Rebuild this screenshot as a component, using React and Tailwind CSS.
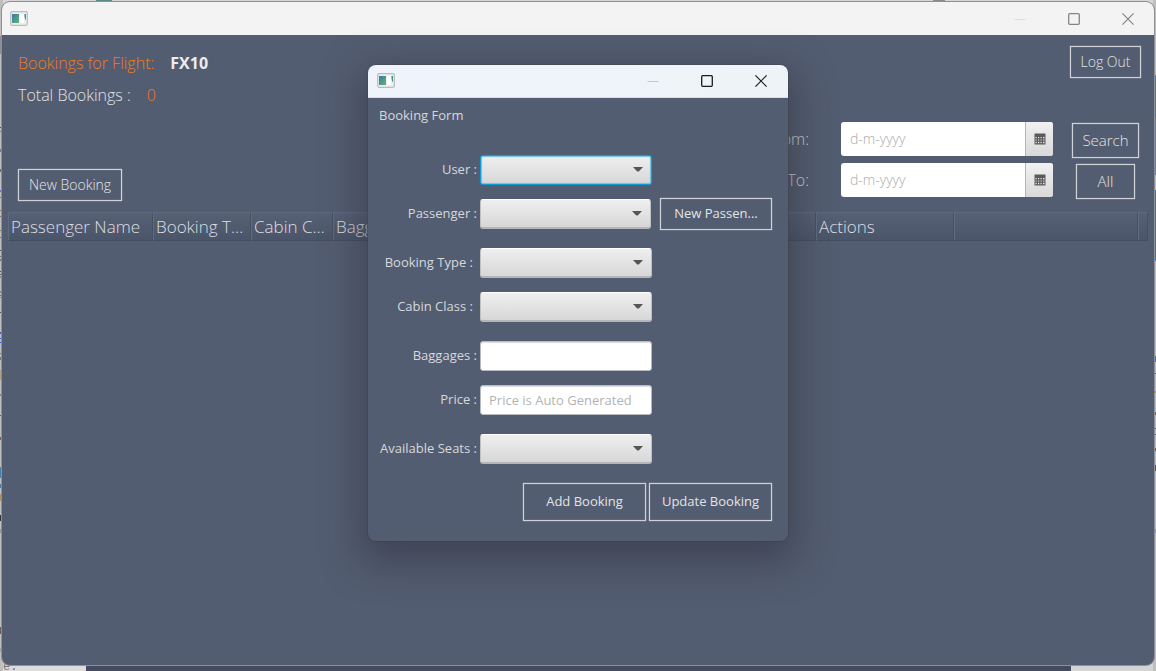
import React from "react";

const LEFT_MARKS = [
  [36, 18, "#8d8f92"], [127, 1, "#55524c"], [131, 1, "#77746a"], [149, 3, "#5b7fa6"], [169, 3, "#4a7396"],
  [190, 2, "#6d6bd0"], [197, 1, "#6d6bd0"], [210, 1, "#7c735c"], [216, 1, "#7c735c"], [230, 1, "#7c735c"], [237, 1, "#7c735c"],
  [250, 1, "#55524c"], [256, 1, "#77746a"], [259, 2, "#77746a"], [271, 1, "#55524c"], [274, 1, "#4f5f78"],
  [276, 2, "#a38a5c"], [291, 2, "#8a8778"], [295, 1, "#4d79a4"], [297, 1, "#a37c4c"], [312, 1, "#55524c"],
  [332, 2, "#5553d6"], [338, 1, "#4668c8"], [342, 1, "#3d3bd8"], [353, 1, "#77746a"], [357, 3, "#8a7a55"],
  [370, 10, "#b0a07c"], [394, 2, "#85857f"], [415, 1, "#6b5a44"], [437, 3, "#8a5c3e"], [467, 11, "#467fa8"],
  [484, 4, "#467fa8"], [494, 7, "#a89468"], [515, 6, "#33343a"], [529, 4, "#8f9a98"], [627, 7, "#6f5a52"], [648, 4, "#a5a5a5"],
];

const RIGHT_MARKS = [
  [75, 43, "#55759c"], [118, 57, "#6c7f97"], [190, 71, "#3a70ad"], [356, 6, "#4c6fa6"], [373, 1, "#55524c"],
  [391, 2, "#a39060"], [412, 3, "#80603f"], [428, 1, "#55524c"], [434, 1, "#55524c"], [448, 3, "#80603f"],
  [465, 6, "#6b5142"], [529, 4, "#8c96a6"],
];

const BUTTON =
  "flex items-center justify-center border border-[#cfd2d7] bg-transparent text-[#e2e3e5] whitespace-nowrap shadow-[0_0_1px_#c4c8ce,inset_0_0_1px_#c4c8ce]";

function Marks({ marks }) {
  return (
    <svg className="h-full w-[3px]" aria-hidden="true">
      {marks.map(([y, h, fill]) => (
        <rect key={y} x="0" y={y} width="3" height={h} fill={fill} />
      ))}
    </svg>
  );
}

function Backdrop() {
  return (
    <div className="absolute inset-0 flex justify-between overflow-hidden bg-[#bfbfbf]">
      <Marks marks={LEFT_MARKS} />
      <div className="flex flex-1 flex-col justify-between">
        <div className="flex h-4 items-start bg-[#d6d6d6]">
          <div className="ml-[93px] h-[2px] w-4 bg-[#5f8a86]" />
          <div className="ml-auto mr-[208px] h-[2px] w-3 bg-[#8b8b8b]" />
        </div>
        <div className="flex h-4 items-end">
          <div className="h-4 w-[83px] overflow-hidden bg-[#dcdcdc] font-['Liberation_Mono'] text-xs leading-[24px] text-[#777]">e:</div>
          <div className="h-4 flex-1 bg-[#444b5e]" />
          <div className="h-4 w-[82px] bg-[#d4d4d4]" />
        </div>
      </div>
      <Marks marks={RIGHT_MARKS} />
    </div>
  );
}

function AppIcon() {
  return (
    <svg width="18" height="15" viewBox="0 0 18 15" aria-hidden="true">
      <defs>
        <linearGradient id="app-icon-pane" x1="0" y1="0" x2="1" y2="1">
          <stop offset="0" stopColor="#3c78a4" />
          <stop offset="1" stopColor="#5fb37a" />
        </linearGradient>
      </defs>
      <rect x="0.7" y="0.7" width="16.6" height="13.6" rx="1.2" fill="#eceeef" stroke="#b9bcc0" strokeWidth="1.2" />
      <rect x="2" y="3" width="7" height="9" fill="url(#app-icon-pane)" />
      <rect x="10" y="3" width="4" height="9" fill="#fff" />
      <path d="M14.4 3H16v6l-.8-.6-.6-2.4z" fill="#3f9592" />
    </svg>
  );
}

function TitleBar({ className, minimize, stroke }) {
  return (
    <div className={`flex items-center justify-between ${className}`}>
      <AppIcon />
      <div className="flex items-center gap-[42px]">
        <button type="button" aria-label="Minimize">
          <svg className="block" width="12" height="12" viewBox="0 0 12 12"><path d="M0.5 6.5h11" stroke={minimize} /></svg>
        </button>
        <button type="button" aria-label="Maximize">
          <svg className="block" width="12" height="12" viewBox="0 0 12 12">
            <rect x="0.7" y="0.7" width="10.6" height="10.6" rx="1" fill="none" stroke={stroke} strokeWidth="1.3" />
          </svg>
        </button>
        <button type="button" aria-label="Close">
          <svg className="block" width="12" height="12" viewBox="0 0 12 12">
            <path d="M0.4 0.4l11.2 11.2M11.6 0.4L0.4 11.6" fill="none" stroke={stroke} strokeWidth="1.2" />
          </svg>
        </button>
      </div>
    </div>
  );
}

function CalendarIcon() {
  return (
    <svg width="12" height="12" viewBox="0 0 12 12" aria-hidden="true">
      <path d="M0.5 0.5h11v11h-11z" fill="#5a5a5a" />
      <path
        d="M1.5 4h1.2v1.2H1.5zM4 4h1.2v1.2H4zM6.5 4h1.2v1.2H6.5zM9 4h1.5v1.2H9zM1.5 6.4h1.2v1.2H1.5zM4 6.4h1.2v1.2H4zM6.5 6.4h1.2v1.2H6.5zM9 6.4h1.5v1.2H9zM1.5 8.8h1.2v1.4H1.5zM4 8.8h1.2v1.4H4zM6.5 8.8h1.2v1.4H6.5zM9 8.8h1.5v1.4H9z"
        fill="#e6e6e6"
      />
    </svg>
  );
}

function DateField({ id, label }) {
  return (
    <>
      <label htmlFor={id} className="text-right text-base text-[#d8dadd]">{label}</label>
      <div className="flex h-[34px] w-[212px] overflow-hidden rounded-[3px] bg-white">
        <input id={id} type="text" placeholder="d-m-yyyy" className="min-w-0 flex-1 px-[9px] text-sm text-[#333] outline-none placeholder:text-[#acacac]" />
        <button type="button" aria-label={`Pick date, ${label}`} className="flex w-7 items-center justify-center border-l border-[#b5b5b5] bg-linear-to-b from-[#f1f1f1] to-[#d9d9d9]">
          <CalendarIcon />
        </button>
      </div>
    </>
  );
}

const COLUMNS = [
  ["Passenger Name", "w-[145px]"],
  ["Booking Type", "w-[98px]"],
  ["Cabin Class", "w-[82px]"],
  ["Baggages", "w-[100px]"],
  ["", ""],
  ["Actions", "w-[138px]"],
  ["", "w-[184px]"],
  ["", "w-[10px]"],
];

function Row({ id, label, focused, children, extra }) {
  return (
    <div className="flex h-[30px] items-center">
      <label htmlFor={id} className="w-[98px] shrink-0 whitespace-nowrap text-right">{label}</label>
      <div className="relative ml-[3px] h-[30px] w-[172px]">
        {children || (
          <>
            <select
              id={id}
              className={`h-full w-full appearance-none rounded-[3px] border bg-linear-to-b from-[#efefef] to-[#d7d7d7] outline-none ${
                focused ? "border-[#109bd2] shadow-[0_0_1px_#109bd2,inset_0_0_1px_1px_#6fc3e4]" : "border-[#c0c0c0] border-t-white border-b-2 border-b-[#b4b5b8]"
              }`}
            />
            <svg className="pointer-events-none absolute right-[9px] top-3" width="10" height="5" viewBox="0 0 10 5" aria-hidden="true">
              <path d="M0 0h10L6 4.2Q5 5 4 4.2z" fill="#555" />
            </svg>
          </>
        )}
      </div>
      {extra}
    </div>
  );
}

const FIELD =
  "h-full w-full rounded-[3px] border border-[#b8bbc0] bg-white px-2 text-[13px] text-[#333] shadow-[inset_0_1px_1px_#ddd] outline-none placeholder:text-[#b3b3b3]";

function BookingDialog() {
  return (
    <section aria-label="Booking Form" className="w-[420px] overflow-hidden rounded-lg bg-[#535d71] text-[13px] text-[#d6d8dc] shadow-[0_14px_36px_8px_rgba(45,45,60,0.5),0_0_0_1px_rgba(80,80,88,0.7)]">
      <TitleBar className="h-[33px] border-b border-[#d5dfe5] bg-linear-to-r from-[#eff4fc] to-[#edf3f6] pb-px pl-[9px] pr-[21px]" minimize="#c3c9ce" stroke="#1b1b1b" />
      <form className="flex flex-col pb-5 pl-[11px] pr-4 pt-[7px]" onSubmit={(e) => e.preventDefault()}>
        <h2 className="leading-5">Booking Form</h2>
        <div className="flex flex-col gap-[19px] pt-[30px]">
          <div className="flex flex-col gap-[14px]">
            <Row id="user" label="User :" focused />
            <Row
              id="passenger"
              label="Passenger :"
              extra={<button type="button" className={`${BUTTON} ml-[9px] h-8 w-28 shrink-0`}>New Passen...</button>}
            />
          </div>
          <div className="flex flex-col gap-[14px] [&_label]:pr-1">
            <Row id="type" label="Booking Type :" />
            <Row id="cabin" label="Cabin Class :" />
          </div>
          <div className="flex flex-col gap-[14px]">
            <Row id="baggages" label="Baggages :"><input id="baggages" type="text" className={FIELD} /></Row>
            <Row id="price" label="Price :"><input id="price" type="text" placeholder="Price is Auto Generated" className={FIELD} /></Row>
          </div>
          <Row id="seats" label="Available Seats :" />
          <div className="flex justify-end gap-[3px]">
            <button type="button" className={`${BUTTON} h-[38px] w-[123px]`}>Add Booking</button>
            <button type="button" className={`${BUTTON} h-[38px] w-[123px]`}>Update Booking</button>
          </div>
        </div>
      </form>
    </section>
  );
}

export default function App() {
  return (
    <div className="relative flex min-h-screen flex-col px-[2px] pb-[6px] pt-[2px] font-['Open_Sans','Noto_Sans',sans-serif]">
      <Backdrop />
      <main className="relative flex flex-1 flex-col overflow-hidden rounded-lg bg-[#535d71] shadow-[0_0_0_1px_#8f9094]">
        <TitleBar className="h-[33px] bg-[#f3f3f3] pl-2 pr-5" minimize="#dedede" stroke="#858585" />
        <header className="flex justify-between pb-[11px] pl-4 pr-[13px] pt-[11px]">
          <div className="flex min-h-[155px] flex-col items-start justify-between">
            <div className="flex flex-col gap-2 pt-[5px] text-base font-[360]">
              <p className="flex items-center gap-4 leading-6">
                <span className="text-[#ee7c1a]">Bookings for Flight:</span>
                <b className="font-bold text-[#ececec]">FX10</b>
              </p>
              <p className="flex items-center gap-4 leading-6 text-[#e0e1e4]">
                <span>Total Bookings :</span>
                <span className="text-[#ee7c1a]">0</span>
              </p>
            </div>
            <button type="button" className={`${BUTTON} h-8 w-[104px] text-sm font-[360]`}>New Booking</button>
          </div>
          <div className="flex flex-col items-end gap-11 text-sm font-[360]">
            <button type="button" className={`${BUTTON} h-8 w-[71px]`}>Log Out</button>
            <div className="mr-[2px] flex gap-[19px]">
              <div className="grid grid-cols-[auto_auto] content-start items-center gap-x-8 gap-y-[7px]">
                <DateField id="from" label="From:" />
                <DateField id="to" label="To:" />
              </div>
              <div className="flex flex-col items-center gap-[6px] pt-px">
                <button type="button" className={`${BUTTON} h-[35px] w-[67px] text-[15px]`}>Search</button>
                <button type="button" className={`${BUTTON} h-[35px] w-[59px] text-[15px]`}>All</button>
              </div>
            </div>
          </div>
        </header>
        <div className="px-[6px]">
          <table className="w-full table-fixed border-separate border-spacing-0 text-[17px] text-[#dddfe2]">
            <thead>
              <tr>
                {COLUMNS.map(([name, width], i) => (
                  <th
                    key={i}
                    scope="col"
                    className={`h-[29px] truncate border border-b-[#454e60] border-l-[#616b7e] border-r-[#465063] border-t-[#5f697c] bg-linear-to-b from-[#576176] to-[#4b5569] p-0 pl-[2px] pr-1 text-left font-[330] leading-[26px] ${width}`}
                  >
                    {name}
                  </th>
                ))}
              </tr>
            </thead>
          </table>
        </div>
      </main>
      <div className="pointer-events-none absolute inset-0 flex items-start justify-center pt-[65px]">
        <div className="pointer-events-auto">
          <BookingDialog />
        </div>
      </div>
    </div>
  );
}
